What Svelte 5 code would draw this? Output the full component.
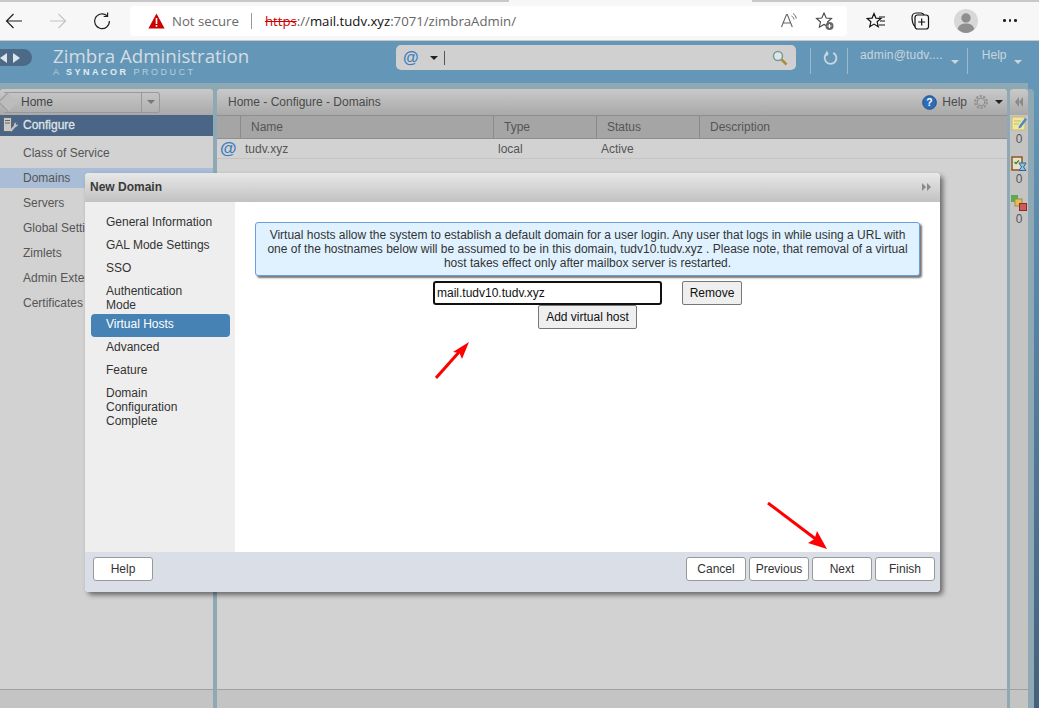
<script lang="ts">
  const sideItems = ['Class of Service', 'Domains', 'Servers', 'Global Settings', 'Zimlets', 'Admin Extensions', 'Certificates'];
  const wizardSteps = [
    { label: 'General Information' },
    { label: 'GAL Mode Settings' },
    { label: 'SSO' },
    { label: 'Authentication Mode', multi: true },
    { label: 'Virtual Hosts', active: true },
    { label: 'Advanced' },
    { label: 'Feature' },
    { label: 'Domain Configuration Complete', narrow: true }
  ];
  const columns = [
    { label: '', width: 24 },
    { label: 'Name', width: 253 },
    { label: 'Type', width: 103 },
    { label: 'Status', width: 103 },
    { label: 'Description', width: 0 }
  ];
  const navButtons = ['Cancel', 'Previous', 'Next', 'Finish'];
</script>

<div class="page">
  <header class="browser">
    <div class="tabstrip"></div>
    <div class="toolbar">
      <svg class="nav-icon" viewBox="0 0 20 20" width="20" height="20"><path d="M18 10H2.5M9.5 3 2.5 10l7 7" fill="none" stroke="#222" stroke-width="1.2"/></svg>
      <svg class="nav-icon" viewBox="0 0 20 20" width="20" height="20"><path d="M2 10h15.5M10.5 3l7 7-7 7" fill="none" stroke="#c4c4c4" stroke-width="1.2"/></svg>
      <svg class="nav-icon" viewBox="0 0 20 20" width="20" height="20"><path d="M15 4.800A7.400 7.400 0 1 0 17.400 10M15.600 1.600v3.900h-3.900" fill="none" stroke="#222" stroke-width="1.200"/></svg>
      <div class="address">
        <svg class="warn" viewBox="0 0 17 16" width="17" height="16"><path d="M8.500.6 16.600 15.400H.4z" fill="#cc0000"/><path d="M7.700 5h1.600v6H7.700zM7.700 12h1.600v1.700H7.700z" fill="#fff"/></svg>
        <span class="not-secure">Not secure</span>
        <span class="addr-sep"></span>
        <span class="url"><span class="scheme">https</span><span class="muted">://</span>mail.tudv.xyz<span class="muted">:7071/zimbraAdmin/</span></span>
        <span class="addr-icons">
          <svg viewBox="0 0 20 20" width="20" height="20"><path d="M1.500 16 6.500 3.500h.8L12.300 16M3.200 12h7.400" fill="none" stroke="#666" stroke-width="1.100"/><path d="M11.500 5c1.500.8 2.300 2 2.500 3.500M13 2.500c2 1.200 3 3 3.300 5" fill="none" stroke="#666" stroke-width="1"/></svg>
          <svg viewBox="0 0 20 20" width="20" height="20"><path d="M9 2l2.200 5 5.300.5-4 3.500 1.200 5.200L9 13.500 4.300 16.200 5.500 11l-4-3.500L6.800 7z" fill="none" stroke="#444" stroke-width="1.100"/><circle cx="14.500" cy="15" r="4" fill="#666"/><path d="M12.500 15h4M14.500 13v4" stroke="#fff" stroke-width="1.100"/></svg>
        </span>
      </div>
      <div class="tool-icons">
        <svg viewBox="0 0 20 20" width="20" height="20"><path d="M8 2.500l1.900 4.600 5 .4-3.800 3.300 1.200 4.900L8 13.100l-4.300 2.600 1.200-4.900L1.100 7.500l5-.4z" fill="none" stroke="#111" stroke-width="1.200"/><path d="M13 6h6M14 10h5M13 14h6" stroke="#111" stroke-width="1.100"/></svg>
        <svg viewBox="0 0 20 20" width="20" height="20"><rect x="5" y="4" width="13.500" height="14" rx="2.500" fill="none" stroke="#111" stroke-width="1.200"/><path d="M5 15.500C2.500 13 2 9 2 6.500 2 4 3.500 2 6 2h5c1.500 0 2.500 1 3 2" fill="none" stroke="#111" stroke-width="1.200"/><path d="M11.700 7.500v7M8.200 11h7" stroke="#111" stroke-width="1.200"/></svg>
        <span class="avatar"><svg viewBox="0 0 24 24" width="24" height="24"><circle cx="12" cy="12" r="12" fill="#d8d8d8"/><circle cx="12" cy="9" r="4.700" fill="#8f8f8f"/><path d="M3.700 20c1-4 4-5.500 8.300-5.500s7.300 1.500 8.300 5.500A12 12 0 0 1 12 24a12 12 0 0 1-8.300-4z" fill="#8f8f8f"/></svg></span>
        <span class="dots"><i></i><i></i><i></i></span>
      </div>
    </div>
  </header>

  <div class="zimbra">
    <div class="topbar">
      <div class="pager">
        <span class="tri left"></span>
        <span class="tri right"></span>
      </div>
      <div class="brand">
        <div class="brand-name">Zimbra Administration</div>
        <div class="brand-sub">A <b>SYNACOR</b> PRODUCT</div>
      </div>
      <div class="search">
        <span class="at">@</span>
        <span class="caret dark"></span>
        <span class="cursor"></span>
        <svg class="lens" viewBox="0 0 16 16" width="16" height="16"><circle cx="6" cy="6" r="4.500" fill="#dfe6e6" stroke="#7b9a9c" stroke-width="1.500"/><path d="M9.500 9.500l5 5" stroke="#b08a3c" stroke-width="2.500"/></svg>
      </div>
      <div class="top-actions">
        <span class="vsep"></span>
        <svg class="refresh" viewBox="0 0 16 16" width="16" height="16"><path d="M5.500 2.800A6.300 6.300 0 1 0 11 3" fill="none" stroke="#c9d6de" stroke-width="2"/><path d="M5 .2v5.400H.5z" fill="#c9d6de" transform="rotate(-16 5 3)"/></svg>
        <span class="vsep"></span>
        <span class="user">admin@tudv....</span>
        <span class="caret light"></span>
        <span class="vsep"></span>
        <span class="help-top">Help</span>
        <span class="caret light"></span>
      </div>
    </div>

    <div class="workspace">
      <aside class="side">
        <div class="panel-head">
          <div class="crumb">
            <span class="crumb-tip"></span>
            <span class="crumb-label">Home</span>
            <span class="crumb-drop"><span class="caret grey"></span></span>
          </div>
        </div>
        <div class="side-section">
          <svg viewBox="0 0 18 18" width="18" height="18"><rect x="2.500" y="1.500" width="8" height="14" fill="#c9c9c9" stroke="#666"/><path d="M4 4.500h5M4 7h5" stroke="#666"/><path d="M9.500 15l5-5.500" stroke="#c4c4c4" stroke-width="2"/><path d="M13 9.500c-.5-1.500.5-3 2.500-3L14.500 8l1 1 1.500-1c0 2-1.500 3-3 2.500z" fill="#c4c4c4"/></svg>
          <span>Configure</span>
        </div>
        <ul class="side-list">
          {#each sideItems as item}
            <li class:current={item === 'Domains'}>{item}</li>
          {/each}
        </ul>
        <div class="panel-foot"></div>
      </aside>

      <main class="center">
        <div class="panel-head center-head">
          <span class="crumbs">Home - Configure - Domains</span>
          <span class="head-tools">
            <svg viewBox="0 0 16 16" width="15" height="15"><circle cx="8" cy="8" r="7.300" fill="#2e6db4" stroke="#1d4f8c"/><text x="8" y="12" text-anchor="middle" font-size="11" font-weight="700" fill="#fff" font-family="Liberation Sans">?</text></svg>
            <span class="head-help">Help</span>
            <svg viewBox="0 0 16 16" width="16" height="16"><circle cx="8" cy="8" r="5.800" fill="none" stroke="#949494" stroke-width="2.400" stroke-dasharray="2.300 1.300"/><circle cx="8" cy="8" r="3.800" fill="none" stroke="#8c8c8c"/></svg>
            <span class="caret black"></span>
          </span>
        </div>
        <div class="col-head">
          {#each columns as col}
            <div class="col" style={col.width ? `width:${col.width}px` : 'flex:1'}>{col.label}</div>
          {/each}
        </div>
        <div class="row">
          <span class="row-at">@</span>
          <span class="cell-name">tudv.xyz</span>
          <span class="cell-type">local</span>
          <span class="cell-status">Active</span>
        </div>
        <div class="center-fill"></div>
        <div class="panel-foot"></div>
      </main>

      <aside class="rail">
        <div class="rail-head"><span class="tri small left"></span><span class="tri small left"></span></div>
        <div class="rail-item">
          <svg viewBox="0 0 16 16" width="16" height="16"><rect x="1" y="2" width="13" height="13" fill="#efe6a0" stroke="#c9b96a"/><path d="M3 6h7M3 9h5" stroke="#c9b96a"/><path d="M8 11l6-8 2 1.500-6 8-2.500 1z" fill="#4a86c8"/></svg>
          <span>0</span>
        </div>
        <div class="rail-item">
          <svg viewBox="0 0 16 16" width="16" height="16"><rect x="1" y="2" width="10" height="13" fill="#e8e0c8" stroke="#8a5a20" stroke-width="1.500"/><path d="M3.500 7l1.500 1.500L8 5.500" fill="none" stroke="#2a8a3a" stroke-width="1.300"/><path d="M8 8h7L12.500 12 15 15.500H8L10.500 12z" fill="#8fc0e0" stroke="#2a6a9a"/></svg>
          <span>0</span>
        </div>
        <div class="rail-item">
          <svg viewBox="0 0 16 16" width="16" height="16"><rect x="0" y="0" width="7" height="7" fill="#5aa85a"/><rect x="4" y="4" width="7" height="7" fill="#d8c060" stroke="#a89030"/><rect x="8.500" y="8.500" width="7" height="7" fill="#d05a5a" stroke="#902a2a"/></svg>
          <span>0</span>
        </div>
        <div class="rail-fill"></div>
        <div class="panel-foot"></div>
      </aside>
      <div class="edge"><div class="edge-band"></div></div>
    </div>
  </div>

  <section class="dialog">
    <div class="dialog-title">
      <span>New Domain</span>
      <span class="title-arrows"><span class="tri small right"></span><span class="tri small right"></span></span>
    </div>
    <div class="dialog-body">
      <nav class="steps">
        {#each wizardSteps as step}
          <div class="step" class:active={step.active} class:multi={step.multi} class:narrow={step.narrow}>{step.label}</div>
        {/each}
      </nav>
      <div class="content">
        <div class="note">Virtual hosts allow the system to establish a default domain for a user login. Any user that logs in while using a URL with one of the hostnames below will be assumed to be in this domain, tudv10.tudv.xyz . Please note, that removal of a virtual host takes effect only after mailbox server is restarted.</div>
        <div class="host-row">
          <input class="host-input" value="mail.tudv10.tudv.xyz" />
          <button class="plain">Remove</button>
        </div>
        <div class="add-row">
          <button class="plain add">Add virtual host</button>
        </div>
      </div>
    </div>
    <div class="dialog-foot">
      <button class="foot-btn">Help</button>
      <div class="foot-right">
        {#each navButtons as label}
          <button class="foot-btn">{label}</button>
        {/each}
      </div>
    </div>
  </section>

  <svg class="arrow arrow-up" viewBox="0 0 36 38" width="36" height="38"><path d="M1 37 25 10" stroke="#fe0000" stroke-width="3"/><path d="M34 1 27 18 24.500 12 18 11z" fill="#fe0000"/></svg>
  <svg class="arrow arrow-down" viewBox="0 0 62 48" width="62" height="48"><path d="M1 1 50 38" stroke="#fe0000" stroke-width="3"/><path d="M60 47 41 41 47.500 37 50 29z" fill="#fe0000"/></svg>
</div>

<style>
  :global(body) {
    margin: 0;
    background: #d2d2d2;
  }

  .page {
    position: relative;
    width: 1039px;
    height: 708px;
    overflow: hidden;
    font-family: "Liberation Sans", Arial, sans-serif;
    font-size: 12px;
  }

  .browser {
    height: 41px;
    background: #f7f7f7;
    border-bottom: 1px solid #c9c9c9;
    box-sizing: border-box;
    position: relative;
  }

  .tabstrip {
    position: absolute;
    top: 0;
    left: 0;
    right: 0;
    height: 2px;
    background: linear-gradient(to right, #c8c8c8 0 509px, #f7f7f7 509px 752px, #c8c8c8 752px);
  }

  .toolbar {
    display: flex;
    align-items: center;
    height: 40px;
    padding: 1px 0 0 4px;
    box-sizing: border-box;
  }

  .nav-icon {
    flex: none;
    margin-right: 24px;
  }

  .address {
    display: flex;
    align-items: center;
    flex: none;
    width: 717px;
    height: 30px;
    margin-left: -6px;
    padding-left: 18px;
    box-sizing: border-box;
    background: #fff;
    border-radius: 4px;
    font-family: "Open Sans", sans-serif;
    font-size: 13.2px;
  }

  .warn { flex: none; }

  .not-secure {
    margin-left: 7px;
    color: #6a6a6a;
  }

  .addr-sep {
    width: 1px;
    height: 16px;
    margin: 0 13px 0 12px;
    background: #999;
  }

  .url { color: #111; }
  .url .muted { color: #666; }
  .url .scheme {
    color: #c00;
    text-decoration: line-through;
  }

  .addr-icons {
    display: flex;
    gap: 15px;
    margin-left: auto;
    margin-right: 12px;
  }

  .tool-icons {
    display: flex;
    align-items: center;
    margin-left: 19px;
    gap: 24px;
  }

  .avatar {
    display: flex;
    margin-right: -1px;
  }

  .dots {
    display: flex;
    gap: 3px;
    margin-left: 2px;
  }

  .dots i {
    width: 2.5px;
    height: 2.5px;
    border-radius: 50%;
    background: #222;
  }

  .zimbra {
    height: 667px;
    display: flex;
    flex-direction: column;
    background: #8fa9b4;
  }

  .topbar {
    display: flex;
    height: 42px;
    flex: none;
    background: #6496b7;
    position: relative;
  }

  .pager {
    width: 40px;
    height: 17px;
    margin: 8px 0 0 -8px;
    flex: none;
    padding-left: 8px;
    box-sizing: border-box;
    display: flex;
    align-items: center;
    gap: 6px;
    background: #4c6a87;
    border-radius: 9px;
  }

  .tri {
    display: inline-block;
    width: 0;
    height: 0;
    border-top: 5px solid transparent;
    border-bottom: 5px solid transparent;
  }

  .tri.left { border-right: 7px solid #dde4ea; }
  .tri.right { border-left: 7px solid #dde4ea; }

  .tri.small {
    border-top-width: 4px;
    border-bottom-width: 4px;
  }

  .tri.small.left { border-right: 4px solid #8a8a8a; }
  .tri.small.right { border-left: 4px solid #8a8a8a; }

  .brand {
    width: 364px;
    flex: none;
    padding: 4px 0 0 21px;
    box-sizing: border-box;
    color: #d3dde3;
  }

  .brand-name {
    font-family: "Open Sans", sans-serif;
    font-size: 18.7px;
    line-height: 22px;
    white-space: nowrap;
  }

  .brand-sub {
    font-size: 9px;
    line-height: 10px;
    letter-spacing: 2.5px;
    color: #b9cedb;
  }

  .brand-sub b { color: #e4ebef; }

  .search {
    display: flex;
    align-items: center;
    width: 400px;
    height: 25px;
    margin-top: 4px;
    padding: 0 8px 0 7px;
    flex: none;
    box-sizing: border-box;
    background: #d0d0d0;
    border-radius: 5px;
  }

  .at {
    font-size: 16px;
    font-weight: 700;
    color: #3f7ebf;
  }

  .caret {
    display: inline-block;
    width: 0;
    height: 0;
    border-left: 4px solid transparent;
    border-right: 4px solid transparent;
    border-top: 4px solid #222;
  }

  .caret.dark { margin-left: 11px; }
  .caret.light { border-top-color: #c9d6de; margin-top: 12px; }
  .caret.grey { border-top-color: #777; }

  .cursor {
    width: 1px;
    height: 14px;
    margin-left: 6px;
    background: #555;
  }

  .lens { margin-left: auto; }

  .top-actions {
    display: flex;
    align-items: flex-start;
    color: #c9d6de;
    font-size: 12px;
    padding-top: 7px;
  }

  .vsep {
    width: 1px;
    height: 26px;
    background: #9dbacb;
  }

  .top-actions > .vsep:first-child { margin-left: 14px; }
  .refresh { width: 15px; height: 15px; margin: 2px 9px 0 12px; }
  .user { margin: 0 8px 0 12px; letter-spacing: .2px; }
  .top-actions .caret { margin-right: 8px; }
  .help-top { margin: 0 8px 0 14px; }

  .workspace {
    display: flex;
    flex: 1;
    min-height: 0;
    padding-top: 6px;
  }

  .side {
    width: 213px;
    flex: none;
    display: flex;
    flex-direction: column;
    background: #d2d2d2;
    border-radius: 4px 4px 0 0;
  }

  .panel-head {
    height: 26px;
    flex: none;
    box-sizing: border-box;
    background: linear-gradient(#c9c9c9, #a9a9a9);
    border-radius: 4px 4px 0 0;
    display: flex;
    align-items: center;
  }

  .crumb {
    position: relative;
    display: flex;
    align-items: center;
    width: 155px;
    height: 19px;
    margin-left: 4px;
    background: linear-gradient(#c4c4c4, #b0b0b0);
    border: 1px solid #999;
    border-left: none;
    border-radius: 0 3px 3px 0;
    color: #444;
  }

  .crumb-tip {
    position: absolute;
    left: -3px;
    top: 2px;
    width: 13px;
    height: 13px;
    transform: rotate(45deg);
    background: #bcbcbc;
    border-left: 1px solid #999;
    border-bottom: 1px solid #999;
    z-index: 0;
  }

  .crumb-label {
    position: relative;
    margin-left: 17px;
    flex: 1;
  }

  .crumb-drop {
    width: 17px;
    height: 100%;
    display: flex;
    align-items: center;
    justify-content: center;
    border-left: 1px solid #999;
  }

  .side-section {
    height: 21px;
    flex: none;
    display: flex;
    align-items: center;
    gap: 4px;
    padding: 0 0 1px 1px;
    box-sizing: border-box;
    background: #4a6585;
    color: #dfe4e8;
  }

  .side-section span { -webkit-text-stroke: .3px #dfe4e8; }

  .side-list {
    list-style: none;
    margin: 0;
    padding: 7px 0 0;
    flex: 1;
    color: #555;
  }

  .side-list li {
    height: 20px;
    margin-bottom: 5px;
    line-height: 21px;
    padding-left: 23px;
    white-space: nowrap;
  }

  .side-list li.current { background: #a9bdd6; }

  .panel-foot {
    height: 18px;
    flex: none;
    background: #c4c4c4;
    border-top: 1px solid #a0a0a0;
  }

  .center {
    width: 790px;
    flex: none;
    margin-left: 4px;
    display: flex;
    flex-direction: column;
    background: #d2d2d2;
    border-radius: 4px 4px 0 0;
    color: #555;
  }

  .center-head {
    justify-content: space-between;
    padding: 0 4px 0 11px;
  }

  .crumbs { color: #4a4a4a; }

  .head-tools {
    display: flex;
    align-items: center;
    gap: 5px;
    color: #4a4a4a;
  }

  .head-help { margin-right: 1px; font-size: 12px; }
  .head-tools .caret { margin-left: 1px; }

  .col-head {
    display: flex;
    height: 24px;
    flex: none;
    box-sizing: border-box;
    background: #a5a5a5;
    border-top: 1px solid #8f8f8f;
    border-bottom: 1px solid #8f8f8f;
    color: #555;
  }

  .col {
    box-sizing: border-box;
    padding: 4px 0 0 10px;
    border-right: 1px solid #8a8a8a;
  }

  .col:last-child { border-right: none; }

  .row {
    display: flex;
    align-items: center;
    height: 20px;
    flex: none;
    box-sizing: border-box;
    border-bottom: 1px solid #c4c4c4;
  }

  .row-at {
    width: 28px;
    padding-left: 3px;
    box-sizing: border-box;
    font-size: 17px;
    font-weight: 700;
    color: #3f7ebf;
  }

  .cell-name { width: 253px; }
  .cell-type { width: 103px; }

  .center-fill { flex: 1; }

  .rail {
    width: 18px;
    flex: none;
    margin-left: 3px;
    display: flex;
    flex-direction: column;
    align-items: center;
    background: #c4c4c4;
    border-radius: 4px 4px 0 0;
    color: #555;
  }

  .rail-head {
    width: 100%;
    height: 26px;
    display: flex;
    align-items: center;
    justify-content: center;
    background: linear-gradient(#c9c9c9, #a9a9a9);
    border-radius: 4px 4px 0 0;
    flex: none;
  }

  .rail-head .tri.small {
    border-top-width: 5px;
    border-bottom-width: 5px;
  }

  .rail-item {
    display: flex;
    flex-direction: column;
    align-items: center;
    height: 40px;
    flex: none;
    line-height: 15px;
  }

  .rail-item span { padding-top: 1px; }

  .rail-fill { flex: 1; }
  .rail .panel-foot { width: 100%; }

  .edge {
    flex: 1;
    margin-top: -6px;
    padding-top: 6px;
    background: linear-gradient(#6496b7, #44617f);
  }

  .edge-band {
    width: 6px;
    height: 100%;
    background: #8fa9b4;
    border-top-right-radius: 4px;
  }

  .dialog {
    position: absolute;
    left: 85px;
    top: 173px;
    width: 855px;
    height: 419px;
    display: flex;
    flex-direction: column;
    border-radius: 4px;
    overflow: hidden;
    box-shadow: 3px 3px 5px rgba(0, 0, 0, .5);
    color: #333;
    background: #fff;
  }

  .dialog-title {
    display: flex;
    align-items: center;
    justify-content: space-between;
    height: 29px;
    flex: none;
    box-sizing: border-box;
    padding: 0 9px 1px 5px;
    background: linear-gradient(#e8e8e8, #c2c2c2);
    font-weight: 700;
    color: #3a3a3a;
  }

  .title-arrows {
    display: flex;
    gap: 1px;
  }

  .dialog-body {
    display: flex;
    flex: 1;
    min-height: 0;
  }

  .steps {
    width: 150px;
    flex: none;
    box-sizing: border-box;
    padding: 9.5px 5px 0 6px;
    background: #eee;
  }

  .step {
    padding: 3px 8px 6px 15px;
    line-height: 14px;
    border-radius: 4px;
  }

  .step.multi { padding: 3px 30px 2px 15px; }
  .step.narrow { padding-right: 50px; }

  .step.active {
    background: #4682b4;
    color: #fff;
  }

  .content {
    flex: 1;
    padding: 20px 20px 0;
  }

  .note {
    box-sizing: border-box;
    height: 54px;
    padding: 5px 5px 0;
    background: #e0f2ff;
    border: 1px solid #6a9ee0;
    border-radius: 3px;
    box-shadow: 2px 2px 2px #777;
    text-align: center;
    line-height: 14px;
  }

  .host-row {
    display: flex;
    margin: 5px 0 0 178px;
  }

  .host-input {
    box-sizing: border-box;
    width: 229px;
    height: 24px;
    padding: 0 2px;
    border: 2px solid #111;
    border-radius: 3px;
    font: 12px "Liberation Sans", Arial, sans-serif;
    color: #111;
    outline: none;
  }

  .plain {
    box-sizing: border-box;
    height: 24px;
    width: 60px;
    margin-left: 20px;
    padding: 0;
    border: 1px solid #777;
    border-radius: 2px;
    background: #efefef;
    font: 12px "Liberation Sans", Arial, sans-serif;
    color: #111;
  }

  .add-row {
    margin: 0 0 0 283px;
  }

  .plain.add {
    width: 99px;
    margin-left: 0;
  }

  .dialog-foot {
    display: flex;
    justify-content: space-between;
    height: 40px;
    flex: none;
    box-sizing: border-box;
    padding: 5px 5px 0 8px;
    background: #dadfe7;
  }

  .foot-right {
    display: flex;
    gap: 3px;
  }

  .foot-btn {
    box-sizing: border-box;
    width: 60px;
    height: 24px;
    padding: 0;
    background: #fff;
    border: 1px solid #999;
    border-radius: 3px;
    font: 12px "Liberation Sans", Arial, sans-serif;
    color: #333;
  }

  .arrow {
    position: absolute;
  }

  .arrow-up { left: 435px; top: 341px; }
  .arrow-down { left: 767px; top: 502px; }
</style>
